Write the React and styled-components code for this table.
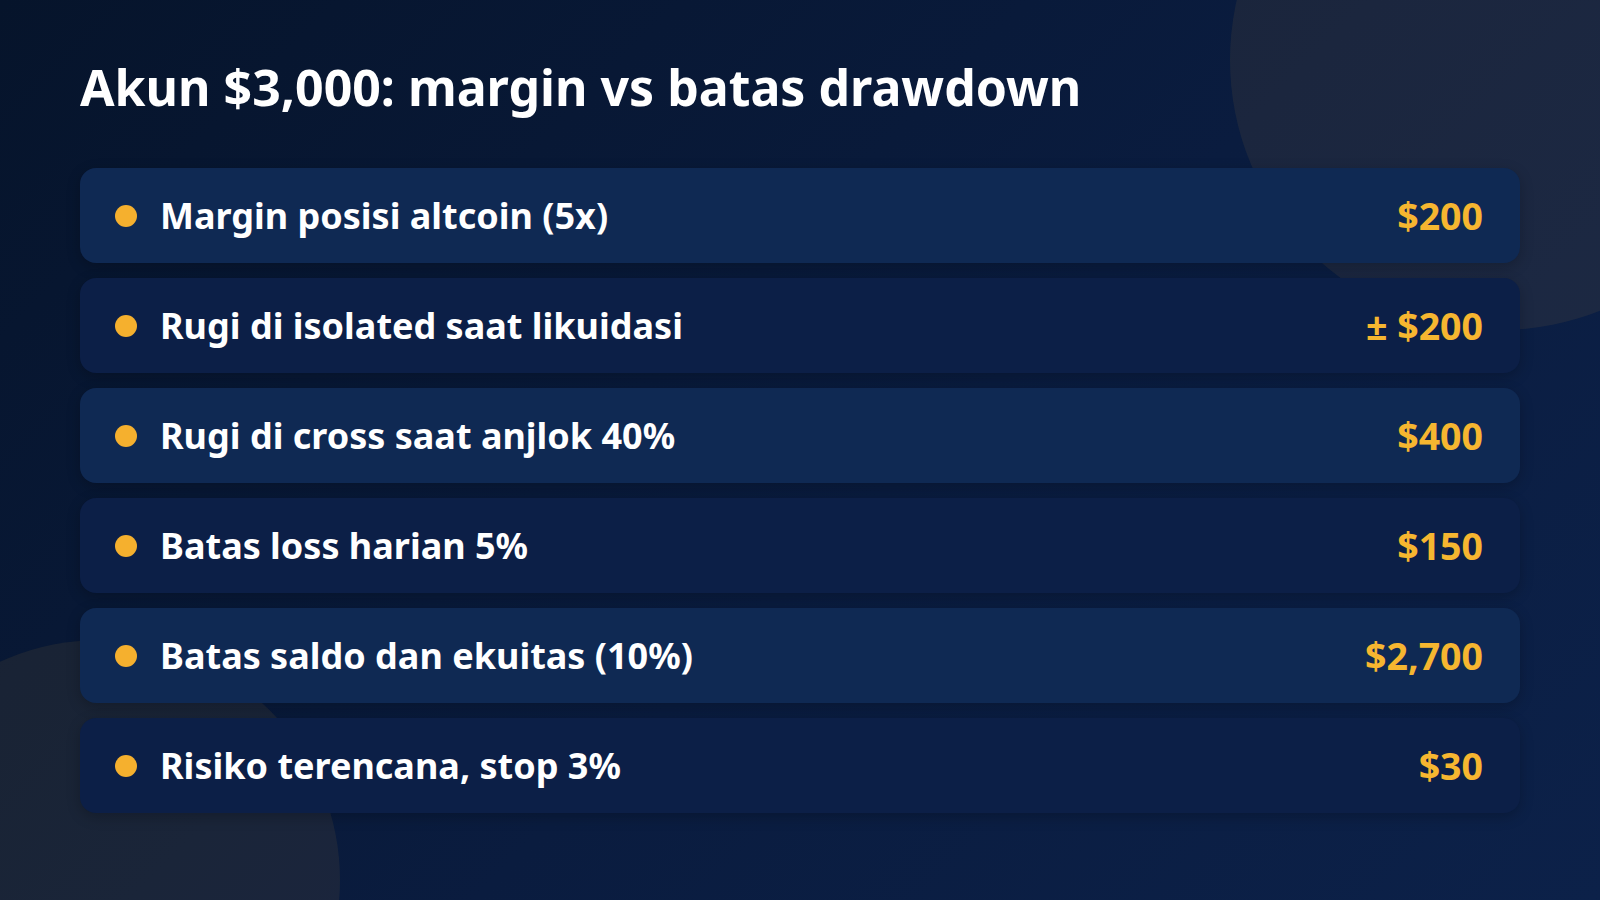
import React from "react";
import styled, { createGlobalStyle } from "styled-components";

const GlobalStyle = createGlobalStyle`
  html, body {
    margin: 0;
    padding: 0;
    background: #081731;
  }
  * {
    box-sizing: border-box;
  }
`;

const Page = styled.div`
  position: relative;
  width: 1600px;
  height: 900px;
  overflow: hidden;
  padding: 57px 80px 0;
  background: linear-gradient(135deg, #06142b 0%, #0a1c3f 55%, #0c2149 100%);
  font-family: "Noto Sans", "Open Sans", sans-serif;
  color: #ffffff;
`;

// decorative circles in the background
const Blob = styled.div`
  position: absolute;
  border-radius: 50%;
  background: rgba(245, 180, 50, 0.075);
  width: ${(p) => p.size}px;
  height: ${(p) => p.size}px;
  left: ${(p) => p.cx - p.size / 2}px;
  top: ${(p) => p.cy - p.size / 2}px;
  pointer-events: none;
`;

const Content = styled.div`
  position: relative;
  z-index: 1;
`;

const Title = styled.h1`
  margin: 0 0 51px;
  font-size: 50px;
  line-height: 1.2;
  font-weight: 700;
  letter-spacing: 0;
`;

const List = styled.div`
  display: flex;
  flex-direction: column;
  gap: 15px;
`;

const Row = styled.div`
  display: flex;
  align-items: center;
  height: 95px;
  padding: 0 37px 0 35px;
  border-radius: 16px;
  background: ${(p) => (p.alt ? "#0c1f47" : "#0f2953")};
  box-shadow: 0 4px 14px rgba(0, 0, 0, 0.22);
`;

const Dot = styled.span`
  flex: none;
  width: 22px;
  height: 22px;
  border-radius: 50%;
  background: #f5b02e;
  margin-right: 23px;
`;

const Label = styled.span`
  flex: 1;
  font-size: 36px;
  line-height: 1.2;
  font-weight: 700;
  color: #ffffff;
`;

const Value = styled.span`
  font-size: 37.5px;
  line-height: 1.2;
  font-weight: 700;
  color: #f6b630;
`;

const rows = [
  { label: "Margin posisi altcoin (5x)", value: "$200" },
  { label: "Rugi di isolated saat likuidasi", value: "± $200" },
  { label: "Rugi di cross saat anjlok 40%", value: "$400" },
  { label: "Batas loss harian 5%", value: "$150" },
  { label: "Batas saldo dan ekuitas (10%)", value: "$2,700" },
  { label: "Risiko terencana, stop 3%", value: "$30" },
];

const App = () => {
  return (
    <Page>
      <GlobalStyle />
      <Blob size={540} cx={1500} cy={60} />
      <Blob size={480} cx={100} cy={880} />
      <Content>
        <Title>Akun $3,000: margin vs batas drawdown</Title>
        <List>
          {rows.map((row, i) => (
            <Row key={row.label} alt={i % 2 === 1}>
              <Dot />
              <Label>{row.label}</Label>
              <Value>{row.value}</Value>
            </Row>
          ))}
        </List>
      </Content>
    </Page>
  );
};

export default App;
